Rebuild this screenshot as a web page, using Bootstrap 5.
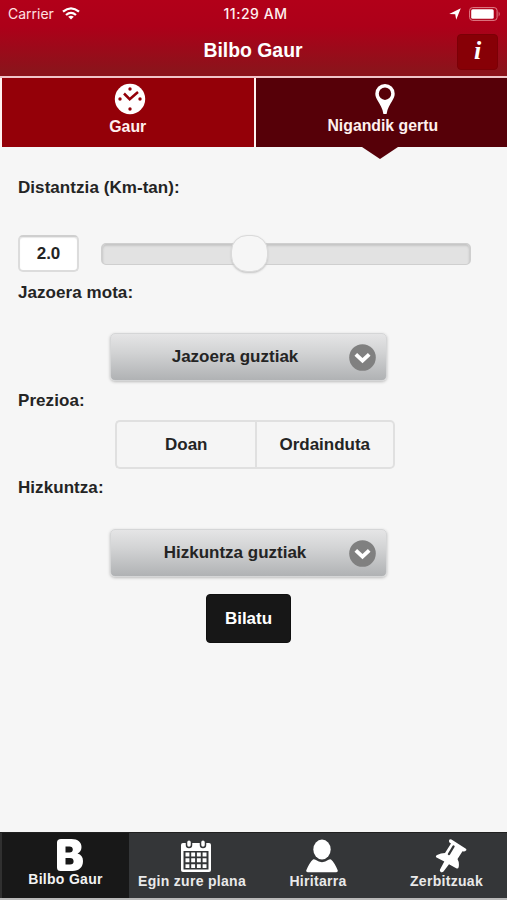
<!DOCTYPE html>
<html lang="eu">
<head>
<meta charset="utf-8">
<meta name="viewport" content="width=device-width, initial-scale=1">
<title>Bilbo Gaur</title>
<link href="https://cdn.jsdelivr.net/npm/bootstrap@5.3.0/dist/css/bootstrap.min.css" rel="stylesheet">
<style>
body{width:507px;height:900px;overflow:hidden;background:#f6f6f6;font-family:"Liberation Sans",Arial,sans-serif;color:#242424;font-size:17px;line-height:20px}
svg{display:block}
.app-head{height:78px;background:linear-gradient(#b20019 0,#ad0019 35%,#8c131b 92%);border-bottom:2px solid #f0c5c8}
.status{height:27px;font-family:Inter,sans-serif;font-size:14px;color:#ffe0e2;padding:0 6px 0 8px}
.status .side{flex:1 1 0}
.clock{font-weight:500;letter-spacing:.55px;color:#fff0f0;padding-left:2px}
.title-row{height:49px;padding-right:9px}
.title-row h1{font-size:19.4px;margin:0 0 4px 1px;line-height:24px}
.btn-info-i{width:41px;height:36px;padding:0 0 2px;background:#870006;border:1px solid #7b0006;border-radius:4px;font:italic bold 26px/32px "Liberation Serif",serif;color:#fff}
.tabs{height:69px;gap:2px;padding-left:2px;background:#fff1f0;margin-bottom:31px}
.tabs a{font-size:15.8px;color:#fff0ee;background:#940008;line-height:18px;padding-top:5px}
.tabs a.active{background:#560008}
.tabs a.active::after{content:"";position:absolute;top:100%;left:50%;margin-left:-19px;border:solid transparent;border-width:12px 18.5px 0;border-top-color:#560008}
.tab-label-near{padding-left:3px}
.form-area{padding:0 18px}
.lbl{height:20px;letter-spacing:.06px}
.slider-row{height:37px;margin-top:37px}
.num{width:61px;height:37px;background:#fff;border:2px solid #dcdcdc;border-top-color:#cfcfcf;border-radius:5px;box-shadow:inset 0 1px 1px #e8e8e8}
.track{width:370px;height:22px;margin-left:22px;background:#e2e2e2;border:1px solid #cfcfcf;border-width:1px 2px 1px 2px;border-radius:5px;box-shadow:inset 0 2px 2px #c6c6c6}
.knob{width:37px;height:37px;top:-9px;left:128px;background:#f6f6f6;border:1px solid #dadada;border-radius:16px;box-shadow:0 1px 2px #c4c4c4}
.picker{width:277px;height:48px;margin:31px 0 0 92px;border:1px solid #d5d6d7;border-radius:5px;background:linear-gradient(#e5e5e6,#d2d3d4 40%,#b0b2b4);box-shadow:0 1px 3px #bbb;padding:0 10px 0 10px}
.duo{width:280px;height:49px;margin:9px 0 0 97px}
.duo .btn{font-size:17px;line-height:20px;padding:0;border:2px solid #e0e0e0;border-radius:5px;background:#f5f5f5;color:#242424}
.go{width:85px;height:49px;background:#171717;color:#fff;font-size:17px;padding:0;border:1px solid #101010;border-radius:4px;margin:17px 0 0 188px}
.lbl-type{margin-top:11px}
.lbl-type + .picker{margin-top:30px}
.lbl-price{margin-top:10px}
.lbl-lang{margin-top:9px}
.foot{height:68px;background:#343638;border-top:1px solid #202020;border-bottom:2px solid #b9b9b9}
.foot a{width:126px;font-size:14px;letter-spacing:.3px;color:#e9e9e9;line-height:16px;padding-top:6px}
.foot a:last-child{padding-left:5px}
.foot a.active{width:129px;background:#181818;border-left:2px solid #303030;color:#f3f3f3}
</style>
</head>
<body class="d-flex flex-column">
<header class="app-head">
  <div class="status d-flex align-items-center">
    <div class="side d-flex align-items-center">
      <span class="me-2">Carrier</span>
      <svg width="18" height="13" viewBox="0 0 18 13" fill="none" stroke="#fff" stroke-width="2.300"><path d="M1 4.700Q9-2 17 4.700M4 8Q9 3.700 14 8"/><path d="M9 12.500 6.200 9.700Q9 7.600 11.800 9.700z" fill="#fff" stroke="none"/></svg>
    </div>
    <span class="clock">11:29 AM</span>
    <div class="side d-flex align-items-center justify-content-end">
      <svg width="12" height="12" viewBox="0 0 12 12" class="me-2"><path d="M11.800.2 7.200 11.800 6.200 6.200 .2 6z" fill="#fff"/></svg>
      <svg width="32" height="14" viewBox="0 0 32 14"><rect x=".6" y=".6" width="27.500" height="12.800" rx="3" fill="none" stroke="#e0808a"/><rect x="2.200" y="2.200" width="22.500" height="9.600" rx="1.500" fill="#fff"/><path d="M29.700 4.500q2 2.500 0 5z" fill="#e0808a"/></svg>
    </div>
  </div>
  <div class="title-row d-flex align-items-center">
    <h1 class="flex-grow-1 text-center fw-bold text-white ps-5">Bilbo Gaur</h1>
    <button class="btn btn-info-i" type="button">i</button>
  </div>
</header>

<nav class="tabs d-flex flex-shrink-0 fw-bold">
  <a class="w-50 d-flex flex-column align-items-center text-decoration-none" href="#">
    <svg class="ms-1" width="32" height="35" viewBox="0 0 32 35"><circle cx="16" cy="16" r="15.200" fill="#fff"/><g fill="#940008"><circle cx="16" cy="6" r="1.700"/><circle cx="16" cy="26" r="1.700"/><circle cx="6" cy="16" r="1.700"/><circle cx="26" cy="16" r="1.700"/></g><path d="m10 10.500 5.700 5.700L24 9" fill="none" stroke="#940008" stroke-width="2.500"/></svg>
    Gaur
  </a>
  <a class="active w-50 position-relative d-flex flex-column align-items-center text-decoration-none" href="#">
    <svg width="20" height="34" viewBox="0 0 20 34" class="ms-2"><path d="M10 1a9.700 9.700 0 0 0-9.700 9.700c0 2.800 1.200 5 2.600 7.400C5 21.500 7.600 25.500 8.400 31h3.200c.8-5.500 3.400-9.500 5.500-12.900 1.400-2.400 2.600-4.600 2.600-7.400A9.700 9.700 0 0 0 10 1zm0 3.500a6.200 6.200 0 1 1 0 12.400 6.200 6.200 0 0 1 0-12.400z" fill="#fff" fill-rule="evenodd"/></svg>
    <span class="tab-label-near">Nigandik gertu</span>
  </a>
</nav>

<main class="form-area flex-grow-1 fw-bold">
  <div class="lbl">Distantzia (Km-tan):</div>
  <div class="slider-row d-flex align-items-center">
    <div class="num d-flex align-items-center justify-content-center">2.0</div>
    <div class="track position-relative"><div class="knob position-absolute"></div></div>
  </div>
  <div class="lbl lbl-type">Jazoera mota:</div>
  <div class="picker d-flex align-items-center">
    <span class="flex-grow-1 text-center">Jazoera guztiak</span>
    <svg width="27" height="27" viewBox="0 0 27 27"><circle cx="13.500" cy="13.500" r="13.300" fill="#808080"/><path d="m6.800 10.300 6.700 6.400 6.700-6.400" fill="none" stroke="#fff" stroke-width="3.800"/></svg>
  </div>
  <div class="lbl lbl-price">Prezioa:</div>
  <div class="duo btn-group d-flex">
    <button type="button" class="btn fw-bold w-50 border-end-0">Doan</button>
    <button type="button" class="btn fw-bold w-50">Ordainduta</button>
  </div>
  <div class="lbl lbl-lang">Hizkuntza:</div>
  <div class="picker d-flex align-items-center">
    <span class="flex-grow-1 text-center">Hizkuntza guztiak</span>
    <svg width="27" height="27" viewBox="0 0 27 27"><circle cx="13.500" cy="13.500" r="13.300" fill="#808080"/><path d="m6.800 10.300 6.700 6.400 6.700-6.400" fill="none" stroke="#fff" stroke-width="3.800"/></svg>
  </div>
  <button type="button" class="btn go fw-bold">Bilatu</button>
</main>

<footer class="foot d-flex flex-shrink-0 fw-bold">
  <a class="active d-flex flex-column align-items-center text-decoration-none" href="#">
    <svg class="ms-2" width="28" height="32" viewBox="0 0 28 32"><path d="M5 0h10.500C22 0 25.500 3.500 25.500 8c0 3.200-1.500 5.300-4 6.500 3.600 1 5.500 3.700 5.500 7.500 0 6.300-4 10-10.500 10H4.500Q1 32 1 28.500v-25Q1 0 5 0zM9.500 7.500v6h4c2.200 0 3.300-1.100 3.300-3s-1.100-3-3.300-3zm0 11.500v6.500h4.500c2.400 0 3.600-1.100 3.600-3.200S16.400 19 14 19z" fill="#fff" fill-rule="evenodd"/></svg>
    Bilbo Gaur
  </a>
  <a class="d-flex flex-column align-items-center text-decoration-none" href="#">
    <svg class="ms-2" width="32" height="34" viewBox="0 0 32 34"><path d="M3 4h26q2 0 2 2v25q0 2-2 2H3q-2 0-2-2V6q0-2 2-2z" fill="#fff"/><path d="M3.500 12h25v18.500h-25z" fill="#343638"/><g fill="#fff" stroke="#343638" stroke-width="1.500"><rect x="6.500" y="0.800" width="5" height="7.800" rx="2.500"/><rect x="20.500" y="0.800" width="5" height="7.800" rx="2.500"/></g><path d="M5.500 15.500h21M5.500 21.300h21M5.500 27.100h21" stroke="#fff" stroke-width="3.900" stroke-dasharray="3.900 1.800"/></svg>
    Egin zure plana
  </a>
  <a class="d-flex flex-column align-items-center text-decoration-none" href="#">
    <svg class="ms-2" width="32" height="34" viewBox="0 0 32 34"><ellipse cx="16" cy="10.500" rx="8.700" ry="10" fill="#fff"/><path d="M7 20.500q1-.8 2.500.3 6.500 4.700 13 0 1.500-1.100 2.500-.3 3.500 3 6.800 11 .2 1.800-1.500 1.800H1.700Q0 33.300.2 31.500 3.500 23.500 7 20.500z" fill="#fff"/></svg>
    Hiritarra
  </a>
  <a class="d-flex flex-column align-items-center text-decoration-none flex-grow-1" href="#">
    <svg class="ms-2" width="32" height="34" viewBox="0 0 32 34"><path d="M14 1.500Q14.500-.3 16.500.5L30.500 9.500q1.500 1 .5 2-1 1.200-3.500.8L22.500 20q2 3.500 1.200 8-.5 2.200-2.500 1.200L14 25.300 8.500 32.500q-1.500 1.300-3 .2-1.200-1.200-.2-2.700l4-7.500L1.500 18.500Q0 17.500 2 16q4-2 8-2L16 4.500Q13.500 3.500 14 1.500z" fill="#fff"/><path d="m18.500 7.500-4.500 7.500" stroke="#343638" stroke-width="2.400" stroke-linecap="round"/></svg>
    Zerbitzuak
  </a>
</footer>
<script src="https://cdn.jsdelivr.net/npm/bootstrap@5.3.0/dist/js/bootstrap.bundle.min.js"></script>
</body>
</html>
